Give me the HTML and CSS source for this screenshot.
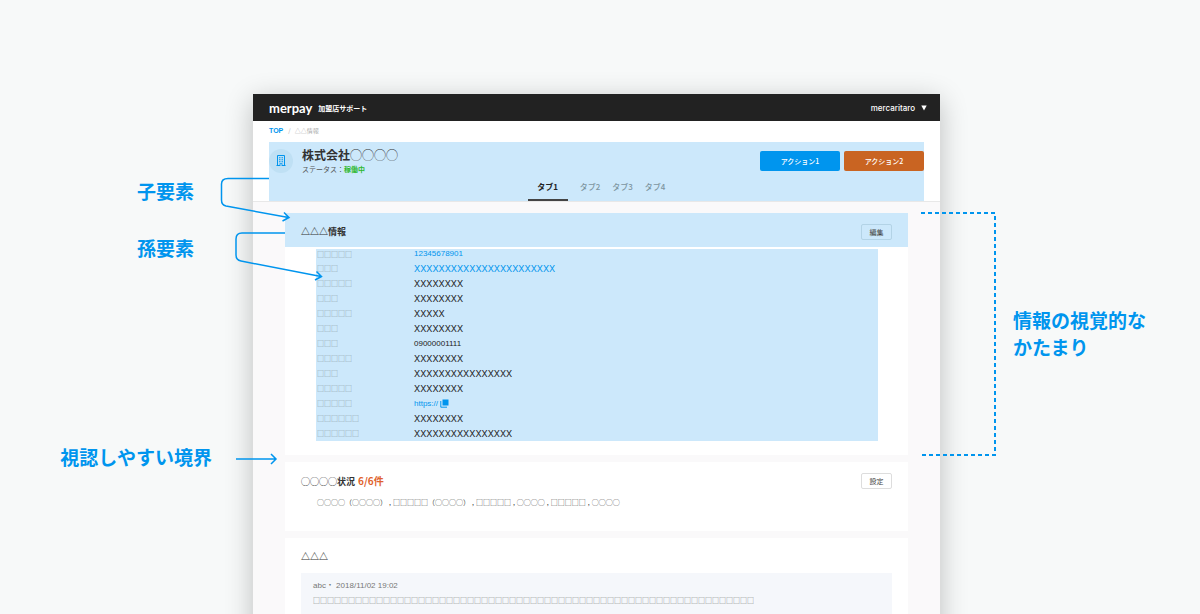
FILE: index.html
```html
<!DOCTYPE html>
<html lang="ja">
<head>
<meta charset="utf-8">
<title>merpay 加盟店サポート</title>
<link rel="stylesheet" href="styles.css">
</head>
<body>
<div class="stage">
  <aside class="notes notes-left">
    <p class="note note-child">子要素</p>
    <p class="note note-grandchild">孫要素</p>
    <p class="note note-border">視認しやすい境界</p>
  </aside>

  <div class="window">
    <header class="topbar">
      <span class="logo">merpay</span>
      <span class="service">加盟店サポート</span>
      <button class="user" type="button">mercaritaro <svg class="caret" viewBox="0 0 6 6" aria-hidden="true"><path d="M0.300 0.500h5.400L3 5.500z"/></svg></button>
    </header>

    <div class="masthead">
      <nav class="crumbs"><a href="#">TOP</a><span class="slash">/</span><span>△△情報</span></nav>
      <div class="merchant">
        <div class="merchant-row">
          <span class="avatar">
            <svg class="building" viewBox="0 0 10 11" aria-hidden="true">
              <path d="M1.500 10V0.500h7v9.500M0.500 10.500h3.500M6 10.500h3.500" fill="none" stroke="currentColor"/>
              <path d="M3 2.200h1.500v1H3zM5.500 2.200H7v1H5.500zM3 4.200h1.500v1H3zM5.500 4.200H7v1H5.500zM3 6.200h1.500v1H3zM5.500 6.200H7v1H5.500zM3.600 8.200h2.800V11H5.600V9H4.400v2H3.600z" fill="currentColor"/>
            </svg>
          </span>
          <div class="identity">
            <h1 class="name">株式会社<span class="blank">◯◯◯◯</span></h1>
            <p class="status">ステータス：<b class="active">稼働中</b></p>
          </div>
          <div class="actions">
            <button class="action action-primary" type="button">アクション1</button>
            <button class="action action-warn" type="button">アクション2</button>
          </div>
        </div>
        <nav class="tabs">
          <a class="tab tab-current" href="#">タブ1</a>
          <a class="tab" href="#">タブ2</a>
          <a class="tab" href="#">タブ3</a>
          <a class="tab" href="#">タブ4</a>
        </nav>
      </div>
    </div>

    <main class="cards">
      <section class="card card-info">
        <div class="card-head card-head-marked">
          <h2 class="card-title">△△△情報</h2>
          <button class="small-button small-button-clear" type="button">編集</button>
        </div>
        <div class="details">
          <table class="rows">
            <tr class="row-first"><th scope="row">□□□□□</th><td><a href="#">12345678901</a></td></tr>
            <tr><th scope="row">□□□</th><td class="mask"><a href="#">XXXXXXXXXXXXXXXXXXXXXXX</a></td></tr>
            <tr><th scope="row">□□□□□</th><td class="mask">XXXXXXXX</td></tr>
            <tr><th scope="row">□□□</th><td class="mask">XXXXXXXX</td></tr>
            <tr><th scope="row">□□□□□</th><td class="mask">XXXXX</td></tr>
            <tr><th scope="row">□□□</th><td class="mask">XXXXXXXX</td></tr>
            <tr><th scope="row">□□□</th><td>09000001111</td></tr>
            <tr><th scope="row">□□□□□</th><td class="mask">XXXXXXXX</td></tr>
            <tr><th scope="row">□□□</th><td class="mask">XXXXXXXXXXXXXXXX</td></tr>
            <tr><th scope="row">□□□□□</th><td class="mask">XXXXXXXX</td></tr>
            <tr><th scope="row">□□□□□</th><td><a href="#">https:// <svg class="copy" viewBox="0 0 9 9" aria-hidden="true"><path d="M2.500 0.500h6v6h-6z" fill="currentColor"/><path d="M0.800 2v6.200H7" fill="none" stroke="currentColor"/></svg></a></td></tr>
            <tr><th scope="row">□□□□□□</th><td class="mask">XXXXXXXX</td></tr>
            <tr><th scope="row">□□□□□□</th><td class="mask">XXXXXXXXXXXXXXXX</td></tr>
          </table>
        </div>
        <svg class="bracket" viewBox="0 0 76 244" aria-hidden="true"><path d="M1 1H75V243H0" /></svg>
      </section>

      <section class="card card-state">
        <div class="card-head">
          <h2 class="card-title">◯◯◯◯状況 <span class="count">6/6件</span></h2>
          <button class="small-button" type="button">設定</button>
        </div>
        <ul class="items">
          <li>◯◯◯◯（◯◯◯◯）</li><li>□□□□□（◯◯◯◯）</li><li>□□□□□</li><li>◯◯◯◯</li><li>□□□□□</li><li>◯◯◯◯</li>
        </ul>
      </section>

      <section class="card card-memo">
        <div class="card-head">
          <h2 class="card-title">△△△</h2>
        </div>
        <article class="memo">
          <p class="memo-meta">abc・ 2018/11/02 19:02</p>
          <p class="memo-text">□□□□□□□□□□□□□□□□□□□□□□□□□□□□□□□□□□□□□□□□□□□□□□□□□□□□□□□□□□□□□□□</p>
        </article>
      </section>
    </main>

    <svg class="arrow arrow-nested" viewBox="0 0 110 110" aria-hidden="true">
      <path d="M51 4.500H10Q3.500 4.500 3.500 10V26Q3.500 31 8 32L70.500 43.500M66 38.500L71 43.500L64.500 47"/>
      <path d="M67 59H24Q18 59 18 65V81Q18 86 23 87L103 102.500M98.500 97.500L103.500 102.500L97 106"/>
    </svg>
    <svg class="arrow arrow-straight" viewBox="0 0 44 12" aria-hidden="true"><path d="M1 6H41M36 1L41 6L36 11"/></svg>
  </div>

  <aside class="notes notes-right">
    <p class="note">情報の視覚的な<br>かたまり</p>
  </aside>
</div>
</body>
</html>
```
FILE: styles.css
```css
:root {
  --blue: #0095ee;
  --tint: #cce8fb;
  --latin: "Liberation Sans", "Noto Sans CJK JP", sans-serif;
}
* { box-sizing: border-box; }
body, h1, h2, p, ul { margin: 0; padding: 0; }
body {
  background: #f7f9f9;
  color: #333;
  font-family: "Noto Sans CJK JP", sans-serif;
  font-size: 7px;
  line-height: 12px;
}
a { color: var(--blue); text-decoration: none; }
button { font: inherit; padding: 0; cursor: pointer; }
svg { display: block; }

.stage {
  display: grid;
  grid-template-columns: 253fr 687fr 260fr;
  height: 100vh;
  overflow: hidden;
}

/* annotations */
.notes { display: flex; flex-direction: column; }
.notes-left { align-items: flex-end; padding-top: 177px; }
.notes-right { padding: 306px 0 0 73px; }
.note {
  color: var(--blue);
  font-size: 19px;
  font-weight: 700;
  line-height: 27px;
  white-space: nowrap;
}
.note-child, .note-grandchild { margin: 0 59px 30px 0; }
.note-border { margin: 152px 41px 0 0; }
.arrow, .bracket {
  position: absolute;
  fill: none;
  stroke: var(--blue);
  stroke-width: 1.5;
}
.arrow-nested { left: -35px; top: 80px; width: 110px; height: 110px; }
.arrow-straight { left: -18px; top: 359px; width: 44px; height: 12px; }
.bracket {
  left: calc(100% + 12px);
  top: -1px;
  width: 76px;
  height: 244px;
  stroke-width: 2;
  stroke-dasharray: 4 3;
}

/* application window */
.window {
  position: relative;
  margin-top: 94px;
  align-self: start;
  min-width: 0;
  min-height: 640px;
  background: #faf9fa;
  box-shadow: 0 6px 26px rgba(0, 0, 0, .24);
}
.topbar {
  display: flex;
  align-items: center;
  gap: 6px;
  height: 27px;
  padding: 0 13px 0 16px;
  background: #222;
  color: #fff;
}
.logo { font-family: Lato, sans-serif; font-size: 13px; font-weight: 700; line-height: 16px; }
.service { font-weight: 700; }
.user {
  display: flex;
  align-items: center;
  gap: 6px;
  margin-left: auto;
  border: 0;
  background: none;
  color: #fff;
  font-family: Inter, sans-serif;
  font-size: 8px;
  font-weight: 500;
}
.caret { width: 6px; height: 6px; fill: currentColor; }

.masthead { padding: 0 16px; background: #fff; border-bottom: 1px solid #e8e8e8; }
.crumbs {
  display: flex;
  align-items: center;
  height: 21px;
  padding-bottom: 2px;
  color: #aaa;
  font-size: 6px;
}
.crumbs a { font-family: var(--latin); font-size: 7px; font-weight: 700; }
.slash { margin: 0 4px 0 5px; }
.merchant { padding-top: 4px; background: var(--tint); }
.merchant-row { display: flex; align-items: center; }
.avatar {
  display: grid;
  place-items: center;
  width: 24px;
  height: 24px;
  border-radius: 50%;
  background: #bfe0f4;
  color: var(--blue);
}
.building { width: 10px; height: 11px; }
.identity { margin-left: 9px; }
.name { font-size: 12px; font-weight: 700; line-height: 17px; color: #333; }
.blank { font-weight: 400; }
.status { color: #555; }
.active { color: #2fb82f; }
.actions { display: flex; gap: 4px; margin-left: auto; }
.action { width: 80px; height: 20px; border: 0; border-radius: 2px; color: #fff; font-weight: 500; }
.action-primary { background: var(--blue); }
.action-warn { background: #c96422; }
.tabs { display: flex; justify-content: center; gap: 12px; font-size: 8px; line-height: 24px; }
.tab { color: #7d959f; font-weight: 500; }
.tab-current { min-width: 40px; border-bottom: 2px solid #444; color: #222; font-weight: 700; text-align: center; }

/* cards */
.cards { display: flex; flex-direction: column; gap: 7px; padding: 11px 32px; }
.card { position: relative; background: #fff; }
.card-info { padding-bottom: 14px; }
.card-state { padding-bottom: 23px; }
.card-head {
  display: flex;
  align-items: center;
  justify-content: space-between;
  height: 34px;
  padding: 4px 16px 0;
}
.card-head-marked { background: var(--tint); }
.card-title { font-size: 9px; font-weight: 700; line-height: 16px; }
.count { margin-left: 1px; color: #e0622e; font-size: 10px; }
.small-button {
  width: 31px;
  height: 16px;
  border: 1px solid #ddd;
  border-radius: 2px;
  background: #fff;
  color: #444;
  line-height: 12px;
}
.small-button-clear { border-color: #b3d3e6; background: none; }

.details { margin: 2px 30px 0 31px; background: var(--tint); }
.rows { width: 100%; border-collapse: collapse; table-layout: fixed; }
.rows th, .rows td { height: 15px; padding: 0; line-height: 15px; }
.rows .row-first th, .rows .row-first td { height: 12px; line-height: 10px; vertical-align: top; }
.rows th { width: 98px; padding-left: 1px; color: #8a9aa3; font-weight: 400; text-align: left; }
.rows td { color: #222; font-family: var(--latin); font-size: 8px; }
.rows .mask { font-family: Inter, sans-serif; font-size: 9px; font-weight: 400; }
.copy { display: inline-block; width: 9px; height: 9px; vertical-align: -2px; }

.items { display: flex; padding: 0 32px; color: #444; list-style: none; }
.items li + li::before { content: ","; margin: 0 2px; }

.memo { margin: 1px 16px 0; padding: 6px 12px 40px; background: #f5f7fb; color: #777; }
.memo-meta { font-family: var(--latin); font-size: 8px; line-height: 14px; }
.memo-text { line-height: 14px; }
```
